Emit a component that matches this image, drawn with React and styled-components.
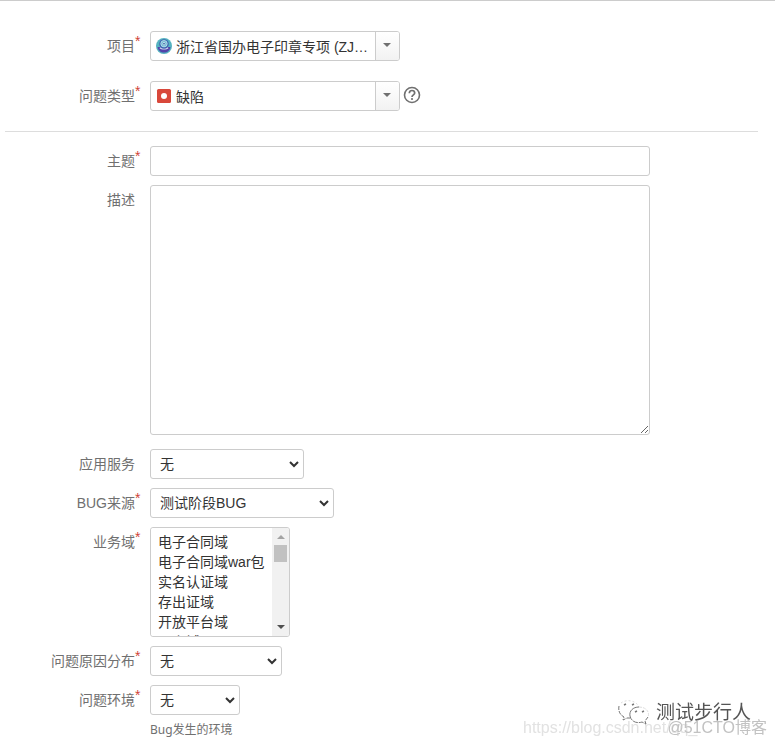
import React from 'react'
import styled, { createGlobalStyle } from 'styled-components'

const GlobalStyle = createGlobalStyle`
* {
  box-sizing: border-box;
}
body {
  margin: 0;
  background: #fff;
  color: #333;
  font-family: "Liberation Sans", Arial, "Noto Sans CJK SC", sans-serif;
  font-size: 14px;
  line-height: 20px;
}
input, select, textarea, button {
  font: inherit;
  color: inherit;
}
`;

const Form = styled.form`
  border-top: 1px solid #ccc;
  padding-top: 30px;
`;

const Header = styled.div`
  display: flex;
  flex-direction: column;
  gap: 20px;
  margin: 0 17px 0 5px;
  padding-bottom: 20px;
  border-bottom: 1px solid #ddd;
`;

const Fields = styled.div`
  display: flex;
  flex-direction: column;
  gap: 9px;
  margin: 0 17px 0 5px;
  padding: 14px 0 6px;
`;

const Row = styled.div`
  display: flex;
  align-items: flex-start;
  padding-bottom: ${props => props.$space || 0}px;
`;

const Label = styled.label`
  position: relative;
  flex: none;
  width: 130px;
  margin-right: 15px;
  padding-top: 5px;
  color: #707070;
  text-align: right;
`;

const Star = styled.span`
  position: absolute;
  left: 100%;
  top: 0;
  color: #d04437;
`;

const Combo = styled.div`
  display: flex;
  align-items: center;
  width: 250px;
  height: 30px;
  padding-left: 5px;
  border: 1px solid #ccc;
  border-radius: 3px;
  overflow: hidden;
`;

const ComboInput = styled.input`
  flex: 1;
  min-width: 0;
  height: 28px;
  margin-left: 4px;
  padding: 0;
  border: 0;
  outline: 0;
  background: none;
`;

const ComboButton = styled.button`
  display: flex;
  align-items: center;
  justify-content: center;
  width: 24px;
  height: 28px;
  padding: 0 2px 2px 0;
  border: 0;
  border-left: 1px solid #ccc;
  background: linear-gradient(#fff, #f2f2f2);
`;

const HelpButton = styled.button`
  display: flex;
  width: 18px;
  height: 18px;
  margin: 5px 0 0 3px;
  padding: 0;
  border: 0;
  background: none;
`;

const TextInput = styled.input`
  width: 500px;
  max-width: 100%;
  height: 30px;
  padding: 4px 5px;
  border: 1px solid #ccc;
  border-radius: 3px;
`;

const TextArea = styled.textarea`
  display: block;
  width: 500px;
  max-width: 100%;
  height: 250px;
  padding: 4px 5px;
  border: 1px solid #ccc;
  border-radius: 3px;
  resize: both;
`;

const SelectBox = styled.div`
  display: grid;
  align-items: center;
  width: ${props => props.$width}px;

  > * {
    grid-area: 1 / 1;
  }
  svg {
    justify-self: end;
    margin-right: 5px;
    pointer-events: none;
  }
`;

const Select = styled.select`
  appearance: none;
  width: 100%;
  height: 30px;
  padding: 0 20px 0 9px;
  border: 1px solid #ccc;
  border-radius: 3px;
  background: #fff;
`;

const ListFrame = styled.div`
  display: flex;
  width: 140px;
  height: 110px;
  border: 1px solid #ccc;
  border-radius: 3px;
  overflow: hidden;
`;

const List = styled.select`
  flex: 1;
  min-width: 0;
  height: 108px;
  padding: 3px 0 0 5px;
  border: 0;
  outline: 0;
  background: #fff;
  scrollbar-width: none;

  option {
    min-height: 20px;
    height: 20px;
    padding: 0 2px;
    line-height: 20px;
  }
`;

const ScrollBar = styled.div`
  display: flex;
  flex-direction: column;
  align-items: center;
  width: 17px;
  padding: 7px 0;
  background: #f1f1f1;
`;

const Thumb = styled.div`
  width: 13px;
  height: 17px;
  margin: 6px 0 auto;
  background: #c1c1c1;
`;

const Hint = styled.div`
  padding-top: 5px;
  color: #707070;
  font-family: "Noto Sans", "Noto Sans CJK SC", sans-serif;
  font-size: 12px;
`;

const Watermark = styled.div`
  position: fixed;
  right: 8px;
  bottom: 4px;
  width: 244px;
  height: 41px;
  pointer-events: none;
  white-space: nowrap;
`;

const Account = styled.div`
  position: absolute;
  right: 16px;
  top: 0;
  display: flex;
  align-items: center;
  gap: 6px;
  color: #555;
  font-size: 19px;
  line-height: 20px;
  text-shadow: -1px -1px 0 #fff;
`;

const BlogUrl = styled.span`
  position: absolute;
  left: 0;
  bottom: 3px;
  color: #e2e2e2;
  font-size: 16px;
`;

const BlogName = styled.span`
  position: absolute;
  right: 0;
  bottom: 3px;
  color: #c2c2c2;
  font-size: 16px;
`;

const Arrow = ({ up, color }) => (
  <svg width="8" height="4" viewBox="0 0 8 4" aria-hidden="true">
    <path d={up ? 'M0 4L4 0L8 4Z' : 'M0 0H8L4 4Z'} fill={color} />
  </svg>
)

const Chevron = () => (
  <svg width="10" height="7" viewBox="0 0 10 7" aria-hidden="true">
    <path d="M1 1L5 5L9 1" fill="none" stroke="#333" strokeWidth="2" />
  </svg>
)

const ProjectIcon = () => (
  <svg width="16" height="16" viewBox="0 0 16 16" aria-hidden="true">
    <circle cx="8" cy="8" r="8" fill="#55b3c0" />
    <path d="M1.500 9H14.500C14 12.500 11.500 14.500 8 14.500S2 12.500 1.500 9Z" fill="#5243aa" />
    <path d="M3.500 10.200C5 12 11 12 12.500 10.200L11.500 9H4.500Z" fill="#d7d5ef" />
    <circle cx="8" cy="6" r="4.800" fill="#3f66b0" />
    <circle cx="8" cy="5.700" r="3.200" fill="#71b8d4" stroke="#c3e7ef" strokeWidth=".8" />
    <circle cx="8" cy="5.700" r="1.300" fill="#386aa6" stroke="#e4f5f8" strokeWidth=".7" />
  </svg>
)

const BugIcon = () => (
  <svg width="16" height="16" viewBox="0 0 16 16" aria-hidden="true">
    <rect x="1" y="1" width="14" height="14" rx="1.500" fill="#d9483b" />
    <circle cx="8" cy="8" r="3" fill="#fff" />
  </svg>
)

const HelpIcon = () => (
  <svg width="18" height="18" viewBox="0 0 18 18" aria-hidden="true">
    <circle cx="9" cy="9" r="7.500" fill="none" stroke="#707070" strokeWidth="1.600" />
    <path d="M6.300 7.200C6.300 5.400 7.400 4.500 9 4.500S11.700 5.500 11.700 7C11.700 8.800 9 9 9 11" fill="none" stroke="#707070" strokeWidth="1.700" />
    <circle cx="9" cy="13" r="1.100" fill="#707070" />
  </svg>
)

const ChatIcon = () => (
  <svg width="32" height="26" viewBox="0 0 32 26" fill="none" stroke="#777" aria-hidden="true">
    <path d="M1 6C0 11 2 15 6 17L5 20L9 18H13" strokeDasharray="4 1" />
    <path d="M3 3C8 -1 18 0 21 7" stroke="#ddd" strokeDasharray="2 2" />
    <path d="M12 16C11 11 15 7 21 7" />
    <path d="M21 7C28 7 32 12 30 17" stroke="#ddd" strokeDasharray="3 1" />
    <path d="M12 16C13 21 18 24 24 22L28 24L27 21L30 17" strokeDasharray="5 1" />
    <path d="M6 5L8 4M14 5L16 4M17 12L19 11M24 12L26 11" strokeWidth="1.500" />
  </svg>
)

const FieldLabel = ({ id, text, required }) => (
  <Label htmlFor={id}>
    {text}
    {required && <Star>*</Star>}
  </Label>
)

const ComboField = ({ id, label, value, icon, children }) => (
  <Row>
    <FieldLabel id={id} text={label} required />
    <Combo>
      {icon}
      <ComboInput id={id} defaultValue={value} />
      <ComboButton type="button" aria-label={label}>
        <Arrow color="#707070" />
      </ComboButton>
    </Combo>
    {children}
  </Row>
)

const SelectField = ({ id, label, value, width, required, hint }) => (
  <Row>
    <FieldLabel id={id} text={label} required={required} />
    <div>
      <SelectBox $width={width}>
        <Select id={id}>
          <option>{value}</option>
        </Select>
        <Chevron />
      </SelectBox>
      {hint && <Hint>{hint}</Hint>}
    </div>
  </Row>
)

const domains = ['电子合同域', '电子合同域war包', '实名认证域', '存出证域', '开放平台域', '公安域']

const App = () => {
  return (
    <>
      <GlobalStyle />
      <Form>
        <Header>
          <ComboField id="project" label="项目" value="浙江省国办电子印章专项 (ZJ…" icon={<ProjectIcon />} />
          <ComboField id="type" label="问题类型" value="缺陷" icon={<BugIcon />}>
            <HelpButton type="button" aria-label="问题类型">
              <HelpIcon />
            </HelpButton>
          </ComboField>
        </Header>
        <Fields>
          <Row>
            <FieldLabel id="summary" text="主题" required />
            <TextInput id="summary" />
          </Row>
          <Row $space={5}>
            <FieldLabel id="description" text="描述" />
            <TextArea id="description" />
          </Row>
          <SelectField id="service" label="应用服务" value="无" width={154} />
          <SelectField id="source" label="BUG来源" value="测试阶段BUG" width={184} required />
          <Row>
            <FieldLabel id="domain" text="业务域" required />
            <ListFrame>
              <List id="domain" multiple size={5}>
                {domains.map(name => <option key={name}>{name}</option>)}
              </List>
              <ScrollBar aria-hidden="true">
                <Arrow up color="#a3a3a3" />
                <Thumb />
                <Arrow color="#505050" />
              </ScrollBar>
            </ListFrame>
          </Row>
          <SelectField id="cause" label="问题原因分布" value="无" width={132} required />
          <SelectField id="env" label="问题环境" value="无" width={90} required hint="Bug发生的环境" />
        </Fields>
      </Form>
      <Watermark>
        <BlogUrl>https://blog.csdn.net/qq_</BlogUrl>
        <BlogName>@51CTO博客</BlogName>
        <Account>
          <ChatIcon />
          测试步行人
        </Account>
      </Watermark>
    </>
  )
}

export default App
